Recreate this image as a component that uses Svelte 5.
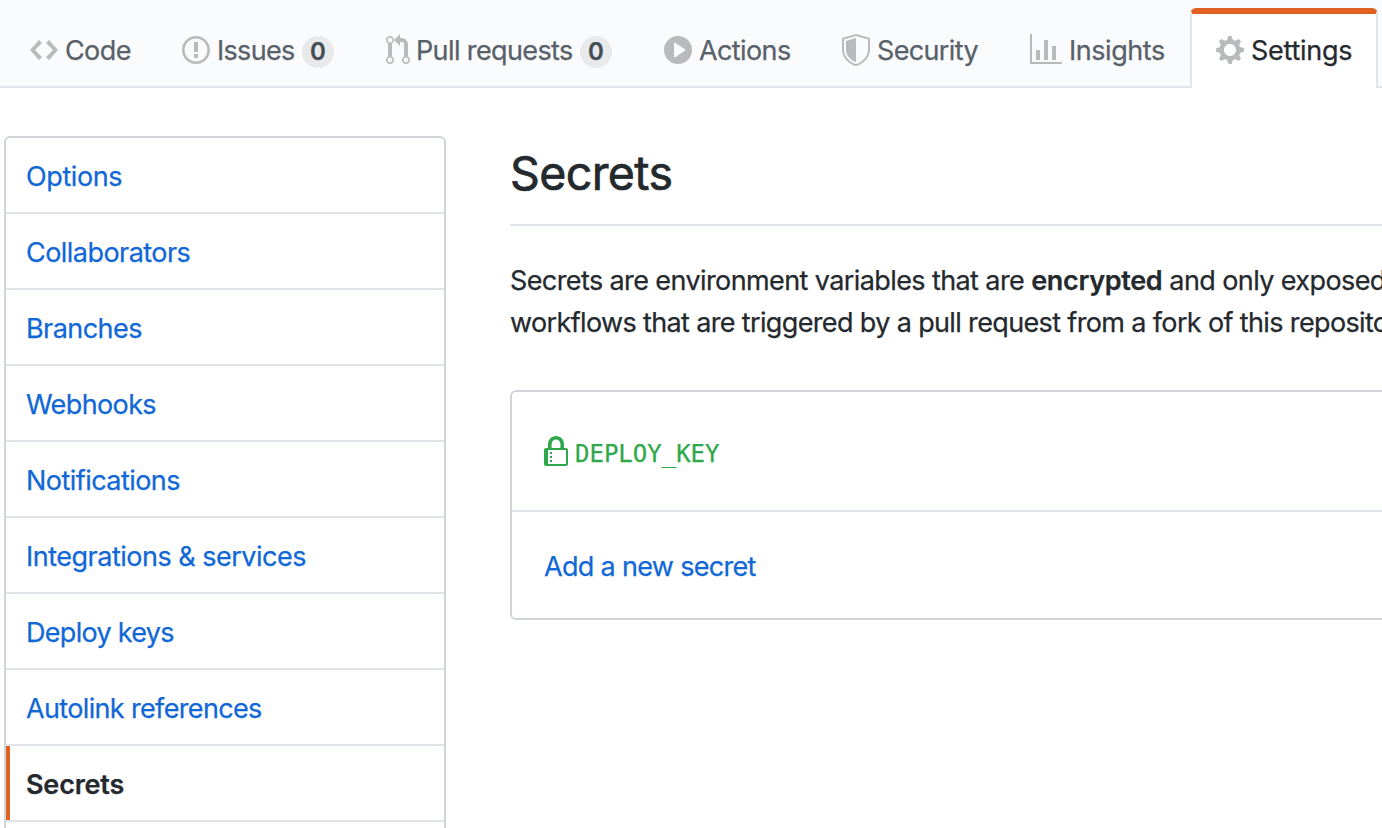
<script>
  const tabs = [
    { label: 'Code', w: 14, width: 152, ls: -0.6, d: 'M9.5 3L8 4.5 11.5 8 8 11.5 9.5 13 14 8 9.5 3zm-5 0L0 8l4.5 5L6 11.5 2.5 8 6 4.5 4.5 3z' },
    { label: 'Issues', w: 14, width: 204, ls: -0.7, count: 0, d: 'M7 2.3c3.14 0 5.7 2.56 5.7 5.7s-2.56 5.7-5.7 5.7A5.71 5.71 0 0 1 1.3 8c0-3.14 2.56-5.7 5.7-5.7zM7 1C3.14 1 0 4.14 0 8s3.14 7 7 7 7-3.14 7-7-3.14-7-7-7zm1 3H6v5h2V4zm0 6H6v2h2v-2z' },
    { label: 'Pull requests', w: 12, width: 278, ls: -0.62, count: 0, d: 'M11 11.28V5c-.03-.78-.34-1.47-.94-2.06C9.46 2.35 8.78 2.03 8 2H7V0L4 3l3 3V4h1c.27.02.48.11.69.31.21.2.3.42.31.69v6.28A1.993 1.993 0 0 0 10 15a1.993 1.993 0 0 0 1-3.72zm-1 2.92c-.66 0-1.2-.55-1.2-1.2 0-.65.55-1.2 1.2-1.2.65 0 1.2.55 1.2 1.2 0 .65-.55 1.2-1.2 1.2zM4 3c0-1.11-.89-2-2-2a1.993 1.993 0 0 0-1 3.72v6.56A1.993 1.993 0 0 0 2 15a1.993 1.993 0 0 0 1-3.72V4.72c.59-.34 1-.98 1-1.72zm-.8 10c0 .66-.55 1.2-1.2 1.2-.65 0-1.2-.55-1.2-1.2 0-.65.55-1.2 1.2-1.2.65 0 1.2.55 1.2 1.2zM2 4.2C1.34 4.2.8 3.65.8 3c0-.65.55-1.2 1.2-1.2.65 0 1.2.55 1.2 1.2 0 .65-.55 1.2-1.2 1.2z' },
    { label: 'Actions', w: 14, width: 178, ls: -0.6, d: 'M14 8A7 7 0 1 1 0 8a7 7 0 0 1 14 0zm-8.223 3.482l4.599-3.066a.5.5 0 0 0 0-.832L5.777 4.518A.5.5 0 0 0 5 4.934v6.132a.5.5 0 0 0 .777.416z' },
    { label: 'Security', w: 14, width: 188, ls: -0.65, d: 'M0 2l7-2 7 2v6.02C14 12.69 8.69 16 7 16c-1.69 0-7-3.31-7-7.98V2zm1 .75L7 1l6 1.75v5.268C13 12.104 8.449 15 7 15c-1.449 0-6-2.896-6-6.982V2.75zm1 .75L7 2v12c-1.207 0-5-2.482-5-5.985V3.5z' },
    { label: 'Insights', w: 16, width: 186, ls: -0.45, d: 'M16 14v1H0V0h1v14h15zM5 13H3V8h2v5zm4 0H7V3h2v10zm4 0h-2V6h2v7z' },
    { label: 'Settings', w: 14, width: 188, ls: -0.25, selected: true, d: 'M14 8.77v-1.6l-1.94-.64-.45-1.09.88-1.84-1.13-1.13-1.81.91-1.09-.45-.69-1.92h-1.6l-.63 1.94-1.11.45-1.84-.88-1.13 1.13.91 1.81-.45 1.09L0 7.23v1.59l1.94.64.45 1.09-.88 1.84 1.13 1.13 1.81-.91 1.09.45.69 1.92h1.59l.63-1.94 1.11-.45 1.84.88 1.13-1.13-.92-1.81.47-1.09L14 8.75v.02zM7 11c-1.66 0-3-1.34-3-3s1.34-3 3-3 3 1.34 3 3-1.34 3-3 3z' }
  ];
  const menu = [
    { label: 'Options', ls: -0.4 },
    { label: 'Collaborators', ls: -0.55 },
    { label: 'Branches', ls: -0.55 },
    { label: 'Webhooks', ls: -0.62 },
    { label: 'Notifications', ls: -0.55 },
    { label: 'Integrations & services', ls: -0.5 },
    { label: 'Deploy keys', ls: -0.7 },
    { label: 'Autolink references', ls: -0.65 },
    { label: 'Secrets', ls: -0.2, selected: true },
    { label: '', ls: 0 }
  ];
</script>

<div class="page">
  <nav class="tabs">
    {#each tabs as t}
      <a class="tab" class:selected={t.selected} style="width: {t.width}px">
        <svg width={t.w * 2} height="32" viewBox="0 0 {t.w} 16" fill-rule="evenodd"><path d={t.d} /></svg>
        <span class="label" style="letter-spacing: {t.ls}px">{t.label}</span>
        {#if t.count !== undefined}<span class="counter">{t.count}</span>{/if}
      </a>
    {/each}
  </nav>
  <div class="body">
    <aside class="menu">
      {#each menu as m}
        <a class="item" class:selected={m.selected} style="letter-spacing: {m.ls}px">{m.label}</a>
      {/each}
    </aside>
    <main>
      <h2>Secrets</h2>
      <p>
        <span class="l1">Secrets are environment variables that are <b>encrypted</b> and only exposed</span><br />
        <span class="l2">workflows that are triggered by a pull request from a fork of this repository</span>
      </p>
      <div class="box">
        <div class="row key">
          <svg width="24" height="32" viewBox="0 0 12 16" fill-rule="evenodd"><path d="M4 13H3v-1h1v1zm8-6v7c0 .55-.45 1-1 1H1c-.55 0-1-.45-1-1V7c0-.55.45-1 1-1h1V4c0-2.2 1.8-4 4-4s4 1.8 4 4v2h1c.55 0 1 .45 1 1zM3.8 6h4.41V4c0-1.22-.98-2.2-2.2-2.2-1.22 0-2.2.98-2.2 2.2v2H3.8zM11 7H2v7h9V7zM4 8H3v1h1V8zm0 2H3v1h1v-1z" /></svg>
          <code>DEPLOY_KEY</code>
        </div>
        <div class="row add"><a>Add a new secret</a></div>
      </div>
    </main>
  </div>
</div>

<style>
  .page {
    width: 1382px;
    height: 828px;
    overflow: hidden;
    background: #fff;
    color: #24292e;
    font: 27px/42px Inter, sans-serif;
    white-space: nowrap;
    -webkit-text-stroke: 0.25px currentColor;
  }
  .page * { box-sizing: border-box; }
  .tabs {
    display: flex;
    height: 88px;
    padding: 8px 0 0 4px;
    background: #fafbfc;
    box-shadow: inset 0 -2px #e1e4e8;
  }
  .tab {
    display: flex;
    flex: none;
    align-items: flex-start;
    height: 80px;
    padding: 26px 0 0 26px;
    color: #586069;
  }
  .tab svg { flex: none; fill: #b8babc; }
  .label { margin: -4px 0 0 7px; }
  .tab:nth-child(3) .label { margin-left: 6px; }
  .tab.selected {
    padding: 20px 0 0 24px;
    border: 2px solid #e1e4e8;
    border-top: 6px solid #e16122;
    border-bottom: 0;
    border-radius: 6px 6px 0 0;
    background: #fff;
    color: #24292e;
  }
  .counter {
    flex: none;
    width: 32px;
    height: 32px;
    margin: 2px 0 0 7.3px;
    border-radius: 16px;
    background: #e8e9eb;
    color: #444d56;
    font-size: 24px;
    font-weight: 600;
    line-height: 32px;
    text-align: center;
  }
  .body { display: flex; padding: 48px 0 0 4px; }
  .menu {
    flex: none;
    width: 442px;
    border: 2px solid #d1d5da;
    border-radius: 6px;
  }
  .item {
    display: block;
    height: 76px;
    padding: 18px 0 0 20px;
    border-bottom: 2px solid #e1e4e8;
    color: #1067d6;
  }
  .item.selected {
    background: linear-gradient(#e16122, #e16122) 0 0 / 4px 100% no-repeat;
    color: #24292e;
    font-weight: 600;
  }
  main { flex: none; width: 1400px; margin-left: 64px; }
  h2 {
    height: 90px;
    margin: 0;
    padding-top: 1px;
    border-bottom: 2px solid #e1e4e8;
    font-size: 46.5px;
    font-weight: 400;
    line-height: 72px;
    letter-spacing: -0.6px;
    -webkit-text-stroke-width: 0.7px;
  }
  p { margin: 34px 0 46px; }
  .l1 { letter-spacing: -0.6px; }
  .l2 { letter-spacing: -0.64px; }
  b { font-weight: 600; letter-spacing: -0.33px; }
  .box { border: 2px solid #d1d5da; border-radius: 6px; }
  .row { display: flex; padding-left: 32px; }
  .key {
    height: 120px;
    padding-top: 44px;
    border-bottom: 2px solid #e1e4e8;
    color: #2ea84a;
  }
  .key svg { flex: none; fill: #2ea84a; }
  code { margin-left: 7px; font: 24px/36px "DejaVu Sans Mono", monospace; }
  .add { height: 106px; padding-top: 34px; }
  .add a { color: #1067d6; letter-spacing: -0.68px; }
</style>
